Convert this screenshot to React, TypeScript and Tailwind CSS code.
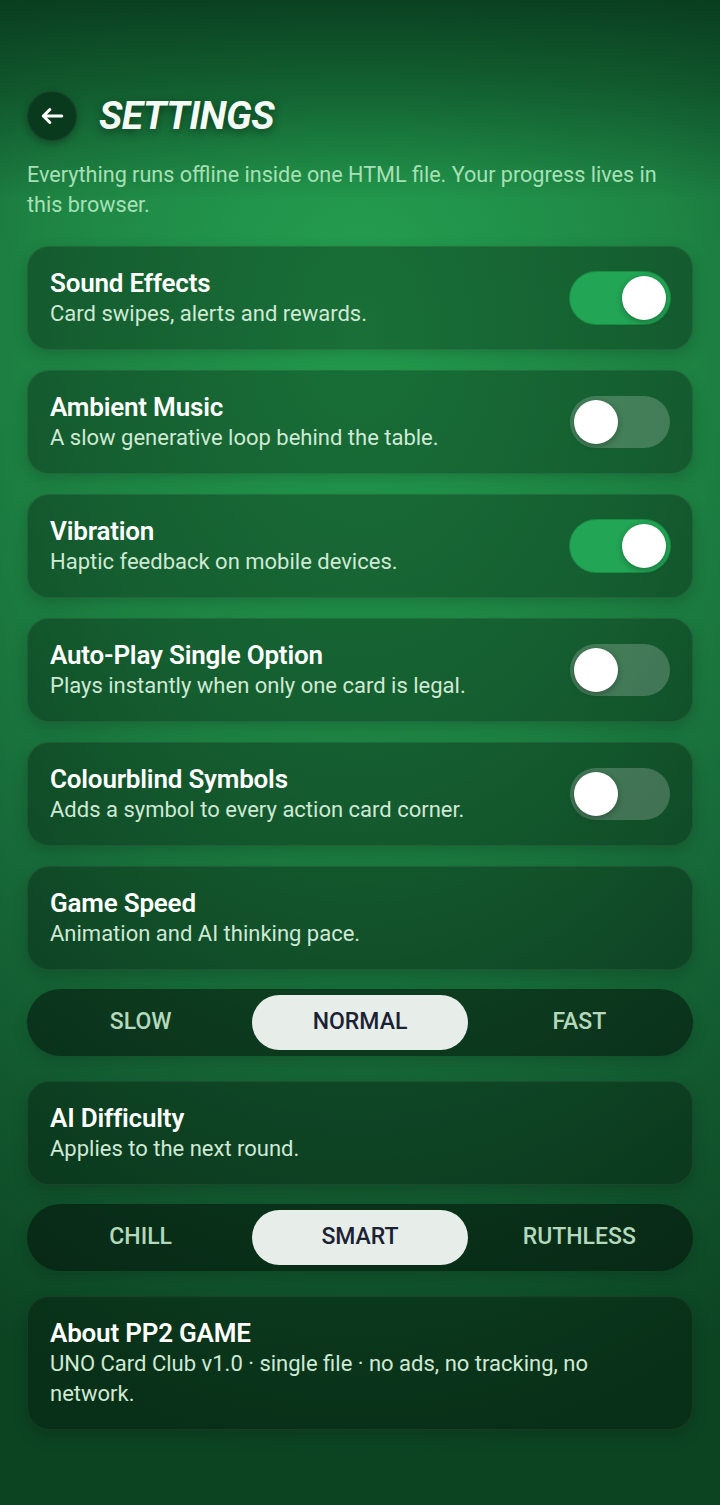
import { useState } from 'react';

// Settings screen — toggles, speed and difficulty pickers

interface ToggleRow {
  key: string;
  title: string;
  desc: string;
}

const TOGGLES: ToggleRow[] = [
  { key: 'sfx', title: 'Sound Effects', desc: 'Card swipes, alerts and rewards.' },
  { key: 'music', title: 'Ambient Music', desc: 'A slow generative loop behind the table.' },
  { key: 'vibe', title: 'Vibration', desc: 'Haptic feedback on mobile devices.' },
  { key: 'auto', title: 'Auto-Play Single Option', desc: 'Plays instantly when only one card is legal.' },
  { key: 'cb', title: 'Colourblind Symbols', desc: 'Adds a symbol to every action card corner.' },
];

const card =
  'rounded-[22px] bg-black/30 border border-white/[0.06] shadow-[0_6px_16px_rgba(0,0,0,0.18)] px-[22px] py-[20px]';
const titleCls = 'text-[26px] leading-[32px] font-semibold text-white tracking-[-0.2px]';
const descCls = 'text-[22px] leading-[30px] text-[#cfe9d5]';

function Switch({ on, onClick }: { on: boolean; onClick: () => void }) {
  return (
    <button
      onClick={onClick}
      className={`relative w-[100px] h-[52px] rounded-full shrink-0 transition-colors ${
        on ? 'bg-[#22a555] ring-1 ring-[#1b8a45]' : 'bg-white/20'
      }`}
    >
      <span
        className={`absolute top-[4px] w-[44px] h-[44px] rounded-full bg-white shadow-[0_2px_6px_rgba(0,0,0,0.3)] transition-all ${
          on ? 'left-[52px]' : 'left-[4px]'
        }`}
      ></span>
    </button>
  );
}

function Segmented({ options, value, onChange }: { options: string[]; value: string; onChange: (v: string) => void }) {
  return (
    <div className="grid grid-cols-3 gap-[4px] p-[6px] rounded-full bg-black/45 shadow-[0_6px_16px_rgba(0,0,0,0.15)]">
      {options.map(opt => (
        <button
          key={opt}
          onClick={() => onChange(opt)}
          className={`h-[55px] rounded-full text-[23px] font-medium uppercase ${
            value === opt ? 'bg-[#e7eee9] text-[#1b2234]' : 'text-[#b4d8bc]'
          }`}
        >
          {opt}
        </button>
      ))}
    </div>
  );
}

export default function App() {
  const [flags, setFlags] = useState<Record<string, boolean>>({
    sfx: true,
    music: false,
    vibe: true,
    auto: false,
    cb: false,
  });
  const [speed, setSpeed] = useState('Normal');
  const [level, setLevel] = useState('Smart');

  return (
    <div className="min-h-[1505px] font-['Roboto',_'Noto_Sans',_sans-serif] text-white bg-[#0c4524] bg-[linear-gradient(180deg,rgba(6,52,26,0.85)_0px,rgba(6,52,26,0.5)_90px,rgba(6,52,26,0)_200px),radial-gradient(ellipse_110%_75%_at_50%_22%,#24a050_0%,#1e8544_40%,#156235_70%,#0c4422_100%)]">
      <div className="px-[27px] pt-[91px] pb-[74px]">
        {/* Header */}
        <div className="flex items-center gap-[22px] h-[50px]">
          <button className="w-[50px] h-[50px] rounded-full bg-[#0a3a1d] border border-white/[0.06] shadow-[0_3px_8px_rgba(0,0,0,0.3)] flex items-center justify-center">
            <svg width="26" height="26" viewBox="0 0 24 24" fill="none" stroke="#fff" strokeWidth="2.8" strokeLinecap="round" strokeLinejoin="round">
              <path d="M21 12H4M10 6l-6 6 6 6" />
            </svg>
          </button>
          <h1 className="text-[39px] leading-none font-bold italic tracking-[-0.5px] text-[#f4fbf5] [text-shadow:0_3px_10px_rgba(0,0,0,0.45)]">SETTINGS</h1>
        </div>
        <p className="mt-[19px] text-[21.6px] leading-[30px] text-[#a8e0b6]">
          Everything runs offline inside one HTML file. Your progress lives in this browser.
        </p>

        {/* Toggles */}
        <div className="mt-[26px] flex flex-col gap-[20px]">
          {TOGGLES.map(t => (
            <div key={t.key} className={`${card} flex items-center justify-between`}>
              <div>
                <div className={titleCls}>{t.title}</div>
                <div className={descCls}>{t.desc}</div>
              </div>
              <Switch on={flags[t.key]} onClick={() => setFlags({ ...flags, [t.key]: !flags[t.key] })} />
            </div>
          ))}

          <div className={card}>
            <div className={titleCls}>Game Speed</div>
            <div className={descCls}>Animation and AI thinking pace.</div>
          </div>
        </div>
        <div className="mt-[19px]">
          <Segmented options={['Slow', 'Normal', 'Fast']} value={speed} onChange={setSpeed} />
        </div>

        <div className={`${card} mt-[25px]`}>
          <div className={titleCls}>AI Difficulty</div>
          <div className={descCls}>Applies to the next round.</div>
        </div>
        <div className="mt-[19px]">
          <Segmented options={['Chill', 'Smart', 'Ruthless']} value={level} onChange={setLevel} />
        </div>

        <div className={`${card} mt-[25px]`}>
          <div className={titleCls}>About PP2 GAME</div>
          <div className={`${descCls} text-[#c6dccb] pr-[20px]`}>
            UNO Card Club v1.0 · single file · no ads, no tracking, no network.
          </div>
        </div>
      </div>
    </div>
  );
}
